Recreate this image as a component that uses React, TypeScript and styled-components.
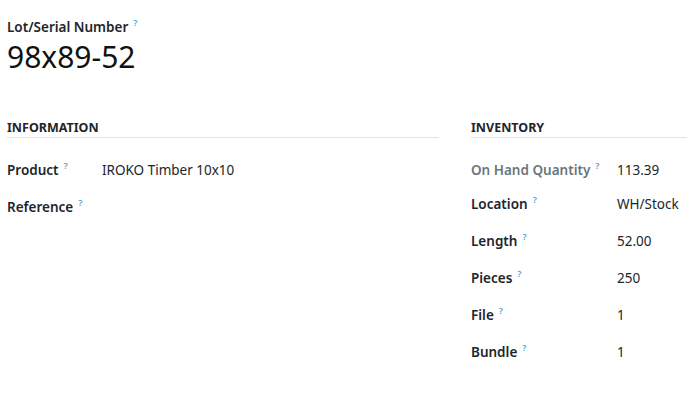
import React, { FC } from "react";
import styled, { createGlobalStyle } from "styled-components";

const GlobalStyle = createGlobalStyle`
  html, body {
    margin: 0;
    padding: 0;
    background: #ffffff;
  }
  body {
    font-family: "Noto Sans", "Open Sans", sans-serif;
    font-size: 13.5px;
    color: #212529;
  }
`;

type Field = {
  label: string;
  value?: string;
  readonly?: boolean;
};

const infoFields: Field[] = [
  { label: "Product", value: "IROKO Timber 10x10" },
  { label: "Reference" },
];

const inventoryFields: Field[] = [
  { label: "On Hand Quantity", value: "113.39", readonly: true },
  { label: "Location", value: "WH/Stock" },
  { label: "Length", value: "52.00" },
  { label: "Pieces", value: "250" },
  { label: "File", value: "1" },
  { label: "Bundle", value: "1" },
];

const Sheet = styled.div`
  padding: 17px 0 0 7px;
  width: 680px;
  overflow: hidden;
`;

const TitleLabel = styled.div`
  font-weight: 600;
  line-height: 20px;
`;

// the little tooltip marker next to every label
const Help = styled.span`
  position: relative;
  top: -6px;
  color: #4aa3d6;
  font-size: 9px;
  line-height: 0;
  font-weight: 600;
  margin-left: 5px;
`;

const Title = styled.h1`
  margin: 0;
  font-size: 30px;
  font-weight: 400;
  line-height: 40px;
  color: #111;
`;

const Columns = styled.div`
  display: grid;
  grid-template-columns: 432px 1fr;
  gap: 32px;
  margin-top: 42px;
`;

const Group = styled.section`
  display: flex;
  flex-direction: column;
`;

const GroupTitle = styled.h2`
  margin: 0;
  font-size: 12.5px;
  font-weight: 700;
  text-transform: uppercase;
  line-height: 18px;
  border-bottom: 1px solid #dee2e6;
  color: #212529;
`;

const Rows = styled.div<{ $labelWidth: number }>`
  display: grid;
  grid-template-columns: ${(p) => p.$labelWidth}px 1fr;
  row-gap: 17px;
  margin-top: 22px;
`;

// readonly rows sit a little tighter to the next one
const Label = styled.div<{ $readonly?: boolean }>`
  font-weight: 600;
  line-height: 20px;
  color: ${(p) => (p.$readonly ? "#6c757d" : "#212529")};
  white-space: nowrap;
  margin-bottom: ${(p) => (p.$readonly ? "-3px" : "0")};
`;

const Value = styled.div<{ $readonly?: boolean }>`
  line-height: 20px;
  white-space: nowrap;
  margin-bottom: ${(p) => (p.$readonly ? "-3px" : "0")};
`;

const FieldGroup: FC<{ title: string; fields: Field[]; labelWidth: number }> = ({
  title,
  fields,
  labelWidth,
}) => (
  <Group>
    <GroupTitle>{title}</GroupTitle>
    <Rows $labelWidth={labelWidth}>
      {fields.map((f) => (
        <React.Fragment key={f.label}>
          <Label $readonly={f.readonly}>
            {f.label}
            <Help>?</Help>
          </Label>
          <Value $readonly={f.readonly}>{f.value ?? ""}</Value>
        </React.Fragment>
      ))}
    </Rows>
  </Group>
);

const App: FC = () => (
  <>
    <GlobalStyle />
    <Sheet>
      <TitleLabel>
        Lot/Serial Number
        <Help>?</Help>
      </TitleLabel>
      <Title>98x89-52</Title>
      <Columns>
        <FieldGroup title="Information" fields={infoFields} labelWidth={95} />
        <FieldGroup title="Inventory" fields={inventoryFields} labelWidth={146} />
      </Columns>
    </Sheet>
  </>
);

export default App;
